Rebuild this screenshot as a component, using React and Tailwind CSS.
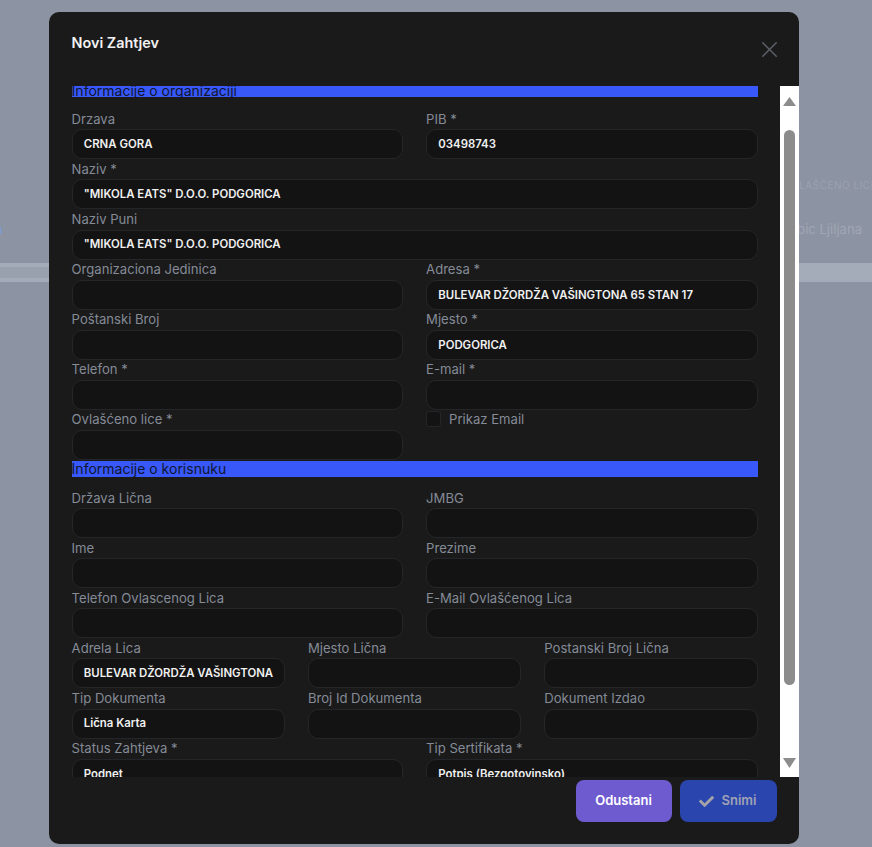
import { X } from "lucide-react"
import { FaCheck } from "react-icons/fa"

const Field = ({ label, value }) => (
  <div className="flex flex-col min-w-0">
    <label className="h-[20.6px] text-[13.1px] leading-5 text-[#858b97] whitespace-nowrap">{label}</label>
    <div className="h-[30px] flex items-center px-[11.2px] pt-px rounded-[10px] bg-[#131313] border border-[#25262a] text-[11.4px] font-semibold text-[#f0f0f0] whitespace-nowrap overflow-hidden">
      {value}
    </div>
  </div>
)

const Row = ({ children, cols = 2 }) => (
  <div className={`grid gap-x-[23px] h-[50.12px] ${cols === 3 ? "grid-cols-3" : "grid-cols-2"}`}>{children}</div>
)

const App = () => {
  return (
    <div className="relative w-full h-[847px] overflow-hidden bg-[#8c93a2] font-['Inter',sans-serif]">
      {/* page behind the dialog */}
      <div className="h-[263px] flex flex-col justify-end">
        <div className="pl-[784px] text-[10px] leading-4 tracking-wider text-[#9aa2b1] whitespace-nowrap overflow-hidden">
          OVLAŠĆENO LICE
        </div>
        <div className="flex justify-between mt-[26px] mb-[24px] pr-[10px] text-[13.1px] leading-5 text-[#a0a7b6] whitespace-nowrap">
          <span className="-ml-[5px] text-[#7f9bdc]">a</span>
          <span>bic Ljiljana</span>
        </div>
      </div>
      <div className="h-[19px] flex">
        <div className="w-[49px] flex flex-col justify-between bg-[#99a1ae]">
          <div className="h-1 bg-[#a4abb9]" />
          <div className="h-1 bg-[#a4abb9]" />
        </div>
        <div className="flex-1 bg-[#a4abb9]" />
      </div>

      <div className="absolute left-[49px] top-[12px] w-[750px] h-[832px] rounded-[10px] bg-[#1a1a1a] flex flex-col overflow-hidden">
        <div className="h-[74px] shrink-0 flex justify-between pl-[22.6px] pr-[16px]">
          <h2 className="mt-[21px] text-[14.4px] leading-5 font-semibold text-[#f2f2f2]">Novi Zahtjev</h2>
          <button className="mt-[23px] h-7 text-[#5c6068]">
            <X size={27} strokeWidth={1.3} />
          </button>
        </div>

        <div className="h-[691px] shrink-0 flex">
          <div className="flex-1 min-w-0 overflow-hidden pl-[22.6px] pr-[22.4px]">
            <div className="-mt-[5px]">
              <div className="h-4 bg-[#3858f9] text-sm leading-[19px] text-[#10162f]">Informacije o organizaciji</div>
              <div className="mt-[11.7px]">
                <Row>
                  <Field label="Drzava" value="CRNA GORA" />
                  <Field label="PIB *" value="03498743" />
                </Row>
                <Row cols={1}>
                  <div className="col-span-2"><Field label="Naziv *" value={'"MIKOLA EATS" D.O.O. PODGORICA'} /></div>
                </Row>
                <Row cols={1}>
                  <div className="col-span-2"><Field label="Naziv Puni" value={'"MIKOLA EATS" D.O.O. PODGORICA'} /></div>
                </Row>
                <Row>
                  <Field label="Organizaciona Jedinica" />
                  <Field label="Adresa *" value="BULEVAR DŽORDŽA VAŠINGTONA 65 STAN 17" />
                </Row>
                <Row>
                  <Field label="Poštanski Broj" />
                  <Field label="Mjesto *" value="PODGORICA" />
                </Row>
                <Row>
                  <Field label="Telefon *" />
                  <Field label="E-mail *" />
                </Row>
                <Row>
                  <Field label="Ovlašćeno lice *" />
                  <div className="flex items-start gap-2">
                    <span className="mt-[2px] w-[15px] h-4 rounded-[3px] bg-[#131313] border border-[#25262a]" />
                    <span className="text-[13.1px] leading-5 text-[#858b97]">Prikaz Email</span>
                  </div>
                </Row>
              </div>
              <div className="mt-[1.4px] h-4 bg-[#3858f9] text-sm leading-4 text-[#10162f]">Informacije o korisnuku</div>
              <div className="mt-[10.66px]">
                <Row>
                  <Field label="Država Lična" />
                  <Field label="JMBG" />
                </Row>
                <Row>
                  <Field label="Ime" />
                  <Field label="Prezime" />
                </Row>
                <Row>
                  <Field label="Telefon Ovlascenog Lica" />
                  <Field label="E-Mail Ovlašćenog Lica" />
                </Row>
                <Row cols={3}>
                  <Field label="Adrela Lica" value="BULEVAR DŽORDŽA VAŠINGTONA" />
                  <Field label="Mjesto Lična" />
                  <Field label="Postanski Broj Lična" />
                </Row>
                <Row cols={3}>
                  <Field label="Tip Dokumenta" value="Lična Karta" />
                  <Field label="Broj Id Dokumenta" />
                  <Field label="Dokument Izdao" />
                </Row>
                <Row>
                  <Field label="Status Zahtjeva *" value="Podnet" />
                  <Field label="Tip Sertifikata *" value="Potpis (Bezgotovinsko)" />
                </Row>
              </div>
            </div>
          </div>

          {/* scrollbar */}
          <div className="w-[19px] shrink-0 bg-white flex flex-col items-center">
            <svg className="mt-[11px] shrink-0" width="13" height="9" viewBox="0 0 13 9">
              <path d="M6.5 0 L13 9 H0 Z" fill="#8c8c8c" />
            </svg>
            <div className="mt-[24px] w-[11px] h-[555px] rounded-full bg-[#8c8c8c]" />
            <svg className="mt-[73px] shrink-0" width="13" height="10" viewBox="0 0 13 10">
              <path d="M0 0 H13 L6.5 10 Z" fill="#8c8c8c" />
            </svg>
          </div>
        </div>

        <div className="flex justify-end gap-2 pt-[3px] pr-[22px]">
          <button className="w-[96px] h-[42px] pr-px rounded-lg bg-[#6f5bd0] text-[13px] font-semibold text-white">Odustani</button>
          <button className="w-[97px] h-[42px] pr-[2px] rounded-lg bg-[#2b45ae] text-[13px] font-semibold text-[#a0a3b5] flex items-center justify-center gap-2">
            <FaCheck size={15} className="text-[#a3a3a8]" />
            Snimi
          </button>
        </div>
      </div>
    </div>
  )
}

export default App
